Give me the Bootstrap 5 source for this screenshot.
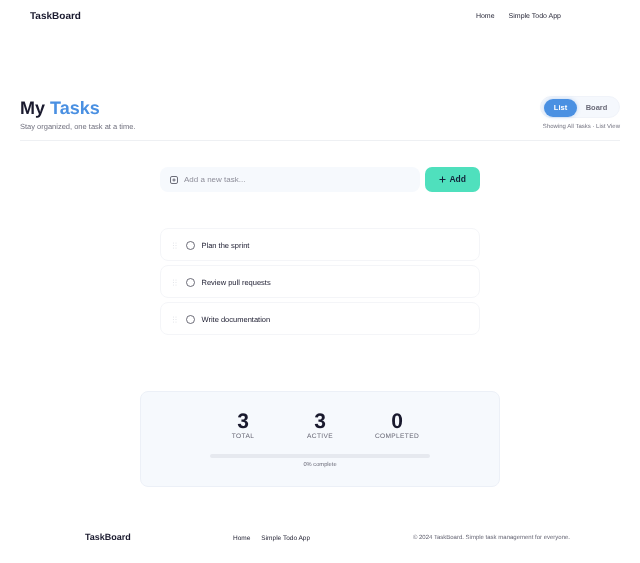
<!DOCTYPE html>
<html lang="en"><head><meta charset="utf-8"><title>TaskBoard</title>
<link href="https://cdn.jsdelivr.net/npm/bootstrap@5.3.0/dist/css/bootstrap.min.css" rel="stylesheet">
<style>
body{font-family:"Liberation Sans",Arial,sans-serif;background:#fff;color:#1a1a2e;height:563px;overflow:hidden;text-rendering:geometricPrecision;filter:blur(.3px)}
.tb-nav{padding:0 79px 0 30px;height:32px}
.tb-brand{font-size:10px;font-weight:700;color:#1a1a2e;padding:1px 0 0;margin:0}
.tb-links{gap:14px}
.tb-links a{font-size:7px;line-height:9px;color:#1f1f30;padding:0;text-decoration:none}
.tb-flinks a{font-size:6.5px;line-height:9px;color:#1f1f30;padding:0;text-decoration:none}
.tb-head{margin:64px 20px 0;height:45px;border-bottom:1px solid #eef0f3}
.tb-title{font-size:18px;font-weight:700;line-height:24px;margin:0}
.tb-title span{color:#4a90e2}
.tb-sub{font-size:7.5px;line-height:10px;color:#70707e;margin:2px 0 0}
.tb-toggle{width:80px;height:22px;padding:2px 3px;background:#f5f8fd;border:1px solid #f0f3f9;border-radius:11px;gap:0}
.tb-toggle .btn{font-size:7.5px;font-weight:700;line-height:1;padding:0;height:18px;border:0;border-radius:9px!important;color:#6c6c7a}
.tb-toggle .tb-on{width:33px;flex:none;background:#4a90e2;color:#fff;box-shadow:0 0 4px rgba(74,144,226,.35)}
.tb-toggle .tb-off{width:41px;flex:none}
.tb-cap{font-size:6px;line-height:8px;color:#737380;margin-top:5px;white-space:nowrap}
.tb-form{width:320px;margin:26px auto 0;gap:5px}
.tb-input{flex:1;height:25px;background:#f6f9fd;border-radius:8px;padding:0 10px;gap:6px}
.tb-input input{border:0;background:transparent;outline:0;font-size:8px;padding:0;width:100%;color:#1a1a2e;font-family:inherit}
.tb-input input::placeholder{color:#8e8e9a;opacity:1}
.tb-add{width:55px;height:25px;background:#4fe0bd;border:0;border-radius:7px;font-size:8.5px;font-weight:700;color:#12233a;padding:0;gap:3.5px}
.tb-list{width:320px;margin:36px auto 0;gap:4px}
.tb-item{height:33px;padding:1px 11px 0;background:#fff;border:1px solid #f4f5f8!important;border-radius:8px!important;gap:7px;font-size:7.5px;color:#1a1a2e}
.tb-item span{padding-top:2px}
.tb-item svg + svg{margin-left:.5px}
.tb-stats{width:360px;height:96px;margin:56px auto 0;background:#f6f9fd;border:1px solid #ecf0f7;border-radius:8px;padding-top:19px}
.tb-cols{width:231px;margin:0 auto}
.tb-stat{width:77px;text-align:center}
.tb-num{font-size:21px;font-weight:700;line-height:21px}
.tb-lab{font-size:6.6px;letter-spacing:.33px;line-height:9px;color:#666674;white-space:nowrap}
.tb-prog{width:220px;height:4px;margin:13px auto 0;background:#e6e9ef;border-radius:2px}
.tb-pct{font-size:5.75px;line-height:8px;color:#666674;text-align:center;margin-top:3px}
.tb-foot{padding:0 70px 0 85px;margin-top:41px;height:20px}
.tb-fbrand{font-size:9px;font-weight:700;width:148px}
.tb-flinks{gap:11px}
.tb-copy{font-size:6px;color:#666674;margin-left:auto}
</style></head><body>
<nav class="navbar tb-nav d-flex justify-content-between align-items-center">
<a class="navbar-brand tb-brand" href="#">TaskBoard</a>
<div class="d-flex tb-links"><a href="#">Home</a><a href="#">Simple Todo App</a></div>
</nav>
<header class="tb-head d-flex justify-content-between">
<div><h1 class="tb-title">My <span>Tasks</span></h1><p class="tb-sub">Stay organized, one task at a time.</p></div>
<div class="d-flex flex-column align-items-end">
<div class="btn-group tb-toggle"><button class="btn tb-on">List</button><button class="btn tb-off">Board</button></div>
<div class="tb-cap">Showing All Tasks · List View</div>
</div>
</header>
<form class="tb-form d-flex">
<div class="tb-input d-flex align-items-center">
<svg width="8" height="8" viewBox="0 0 8 8" fill="none" stroke="#4a4a58" stroke-width=".8" class="flex-shrink-0"><rect x=".5" y=".5" width="7" height="7" rx="1.4"/><path d="M4 2.4v3.2M2.4 4h3.2"/></svg>
<input type="text" placeholder="Add a new task...">
</div>
<button type="button" class="btn tb-add d-flex align-items-center justify-content-center"><svg width="7" height="7" viewBox="0 0 7 7" stroke="#12233a" stroke-width="1"><path d="M3.5 .5v6M.5 3.5h6"/></svg>Add</button>
</form>
<ul class="list-group tb-list">
<li class="list-group-item tb-item d-flex align-items-center"><svg width="6" height="7" viewBox="0 0 6 7" fill="#dfe1e6"><circle cx="1.5" cy="1" r=".6"/><circle cx="4" cy="1" r=".6"/><circle cx="1.5" cy="3.5" r=".6"/><circle cx="4" cy="3.5" r=".6"/><circle cx="1.5" cy="6" r=".6"/><circle cx="4" cy="6" r=".6"/></svg><svg width="9" height="9" viewBox="0 0 9 9" fill="none" stroke="#4a4a58" stroke-width=".8"><circle cx="4.5" cy="4.5" r="4"/></svg><span>Plan the sprint</span></li>
<li class="list-group-item tb-item d-flex align-items-center"><svg width="6" height="7" viewBox="0 0 6 7" fill="#dfe1e6"><circle cx="1.5" cy="1" r=".6"/><circle cx="4" cy="1" r=".6"/><circle cx="1.5" cy="3.5" r=".6"/><circle cx="4" cy="3.5" r=".6"/><circle cx="1.5" cy="6" r=".6"/><circle cx="4" cy="6" r=".6"/></svg><svg width="9" height="9" viewBox="0 0 9 9" fill="none" stroke="#4a4a58" stroke-width=".8"><circle cx="4.5" cy="4.5" r="4"/></svg><span>Review pull requests</span></li>
<li class="list-group-item tb-item d-flex align-items-center"><svg width="6" height="7" viewBox="0 0 6 7" fill="#dfe1e6"><circle cx="1.5" cy="1" r=".6"/><circle cx="4" cy="1" r=".6"/><circle cx="1.5" cy="3.5" r=".6"/><circle cx="4" cy="3.5" r=".6"/><circle cx="1.5" cy="6" r=".6"/><circle cx="4" cy="6" r=".6"/></svg><svg width="9" height="9" viewBox="0 0 9 9" fill="none" stroke="#4a4a58" stroke-width=".8"><circle cx="4.5" cy="4.5" r="4"/></svg><span>Write documentation</span></li>
</ul>
<section class="tb-stats">
<div class="d-flex tb-cols">
<div class="tb-stat"><div class="tb-num">3</div><div class="tb-lab">TOTAL</div></div>
<div class="tb-stat"><div class="tb-num">3</div><div class="tb-lab">ACTIVE</div></div>
<div class="tb-stat"><div class="tb-num">0</div><div class="tb-lab">COMPLETED</div></div>
</div>
<div class="tb-prog"></div>
<div class="tb-pct">0% complete</div>
</section>
<footer class="tb-foot d-flex align-items-center">
<div class="tb-fbrand">TaskBoard</div>
<div class="d-flex tb-flinks"><a href="#">Home</a><a href="#">Simple Todo App</a></div>
<div class="tb-copy">© 2024 TaskBoard. Simple task management for everyone.</div>
</footer>
<script src="https://cdn.jsdelivr.net/npm/bootstrap@5.3.0/dist/js/bootstrap.bundle.min.js"></script>
</body></html>
